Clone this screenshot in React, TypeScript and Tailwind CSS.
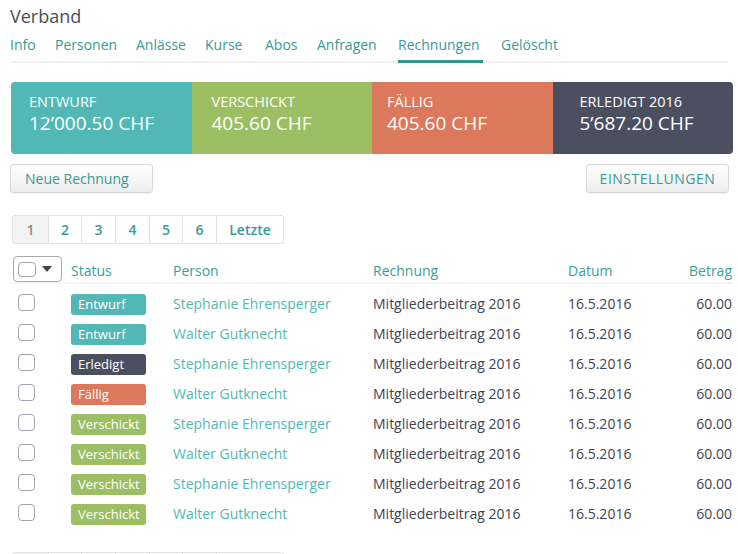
import React from "react";

const tabs: { t: string; w: string }[] = [
  { t: "Info", w: "w-[45px]" },
  { t: "Personen", w: "w-[81px]" },
  { t: "Anlässe", w: "w-[69px]" },
  { t: "Kurse", w: "w-[60px]" },
  { t: "Abos", w: "w-[52px]" },
  { t: "Anfragen", w: "w-[81px]" },
  { t: "Rechnungen", w: "w-[103px]" },
  { t: "Gelöscht", w: "w-[70px]" },
];

const cards = [
  { label: "ENTWURF", value: "12’000.50 CHF", bg: "bg-[#52b8b6]", pl: "pl-[18px]" },
  { label: "VERSCHICKT", value: "405.60 CHF", bg: "bg-[#9bbf62]", pl: "pl-[20px]" },
  { label: "FÄLLIG", value: "405.60 CHF", bg: "bg-[#dc785b]", pl: "pl-[15px]" },
  { label: "ERLEDIGT 2016", value: "5’687.20 CHF", bg: "bg-[#4a5060]", pl: "pl-[27px]" },
];

type Status = "Entwurf" | "Erledigt" | "Fällig" | "Verschickt";
const badgeBg: Record<Status, string> = {
  Entwurf: "bg-[#52b8b6]",
  Erledigt: "bg-[#4a5060]",
  Fällig: "bg-[#dc785b]",
  Verschickt: "bg-[#9bbf62]",
};

const rows: { status: Status; person: string }[] = [
  { status: "Entwurf", person: "Stephanie Ehrensperger" },
  { status: "Entwurf", person: "Walter Gutknecht" },
  { status: "Erledigt", person: "Stephanie Ehrensperger" },
  { status: "Fällig", person: "Walter Gutknecht" },
  { status: "Verschickt", person: "Stephanie Ehrensperger" },
  { status: "Verschickt", person: "Walter Gutknecht" },
  { status: "Verschickt", person: "Stephanie Ehrensperger" },
  { status: "Verschickt", person: "Walter Gutknecht" },
];

function Pagination() {
  const cells = [
    { t: "1", w: "w-[35px]", active: true },
    { t: "2", w: "w-[33px]" },
    { t: "3", w: "w-[34px]" },
    { t: "4", w: "w-[34px]" },
    { t: "5", w: "w-[33px]" },
    { t: "6", w: "w-[34px]" },
    { t: "Letzte", w: "w-[67px]" },
  ];
  return (
    <div className="ml-[2px] flex h-[29px] w-max overflow-hidden rounded-[3px] border border-[#e2e2e2]">
      {cells.map((c, i) => (
        <div
          key={i}
          className={`${c.w} flex items-center justify-center text-[14px] font-semibold ${
            i > 0 ? "border-l border-[#e2e2e2]" : ""
          } ${c.active ? "bg-[#f3f3f3] text-[#8a8a8a]" : "bg-white text-[#3a9a96]"}`}
        >
          {c.t}
        </div>
      ))}
    </div>
  );
}

function Checkbox({ className = "" }: { className?: string }) {
  return <div className={`rounded-[4px] border border-[#a3a4ae] bg-white ${className}`} />;
}

export default function App() {
  return (
    <div className="w-[738px] min-h-[554px] bg-white px-[10px] font-['Open_Sans',sans-serif] text-[#3d4452]">
      <div className="pt-[4px] text-[18px] leading-[24px] text-[#474d5a]">Verband</div>

      <nav className="flex border-b-2 border-[#f0f0f0]">
        {tabs.map(({ t, w }) => (
          <div key={t} className={`${w} -mb-[2px] flex`}>
            <div
              className={`pt-[7px] pb-[5px] text-[14px] leading-[20px] text-[#3a9a96] border-b-[3px] ${
                t === "Rechnungen" ? "w-[85px] border-[#2f9691]" : "border-transparent"
              }`}
            >
              {t}
            </div>
          </div>
        ))}
      </nav>

      <div className="mt-[19px] ml-[1px] mr-[-5px] grid h-[72px] grid-cols-4 overflow-hidden rounded-[4px]">
        {cards.map((c) => (
          <div key={c.label} className={`${c.bg} ${c.pl} pt-[11px] text-white`}>
            <div className="text-[14.5px] leading-[18px]">{c.label}</div>
            <div className="text-[19px] leading-[24px]">{c.value}</div>
          </div>
        ))}
      </div>

      <div className="mt-[10px] flex items-center justify-between">
        <button className="h-[29px] w-[143px] rounded-[3px] border border-[#d8d8d8] bg-gradient-to-b from-white to-[#ececec] pl-[14px] text-left text-[14px] text-[#3a9a96] shadow-[0_1px_1px_rgba(0,0,0,0.05)]">
          Neue Rechnung
        </button>
        <button className="mr-[-1px] h-[29px] w-[143px] rounded-[3px] border border-[#d8d8d8] bg-gradient-to-b from-white to-[#ececec] text-[14px] tracking-[0.5px] text-[#3a9a96] shadow-[0_1px_1px_rgba(0,0,0,0.05)]">
          EINSTELLUNGEN
        </button>
      </div>

      <div className="mt-[22px]">
        <Pagination />
      </div>

      <div className="mt-[12px] mr-[-5px]">
        <div className="flex h-[28px] items-end border-b-2 border-[#f4f4f4] text-[14px] leading-[20px] text-[#3aa09b]">
          <div className="w-[61px] self-start pl-[3px]">
            <div className="flex h-[26px] w-[49px] items-center rounded-[4px] border border-[#aaaaaa] pl-[4px]">
              <Checkbox className="h-[15px] w-[18px]" />
              <svg width="10" height="6" viewBox="0 0 10 6" className="ml-[6px]">
                <path d="M0 0 L10 0 L5 6 Z" fill="#3d4452" />
              </svg>
            </div>
          </div>
          <div className="w-[102px] pb-[1px]">Status</div>
          <div className="w-[200px] pb-[1px]">Person</div>
          <div className="w-[195px] pb-[1px]">Rechnung</div>
          <div className="flex-1 pb-[1px]">Datum</div>
          <div className="pb-[1px] pr-[1px] text-right">Betrag</div>
        </div>

        <div className="pt-[5px]">
          {rows.map((r, i) => (
            <div key={i} className="flex h-[30px] items-center text-[14px] leading-[20px]">
              <div className="w-[61px] pl-[8px]">
                <Checkbox className="-mt-[3px] h-[17px] w-[17px]" />
              </div>
              <div className="w-[102px]">
                <div
                  className={`${badgeBg[r.status]} flex h-[21px] w-[75px] items-center rounded-[3px] pl-[7px] text-[13px] text-white`}
                >
                  {r.status}
                </div>
              </div>
              <div className="w-[200px] text-[#52b8b6]">{r.person}</div>
              <div className="w-[195px]">Mitgliederbeitrag 2016</div>
              <div className="flex-1">16.5.2016</div>
              <div className="pr-[1px] text-right">60.00</div>
            </div>
          ))}
        </div>
      </div>

      <div className="mt-[23px] pb-[10px]">
        <Pagination />
      </div>
    </div>
  );
}
